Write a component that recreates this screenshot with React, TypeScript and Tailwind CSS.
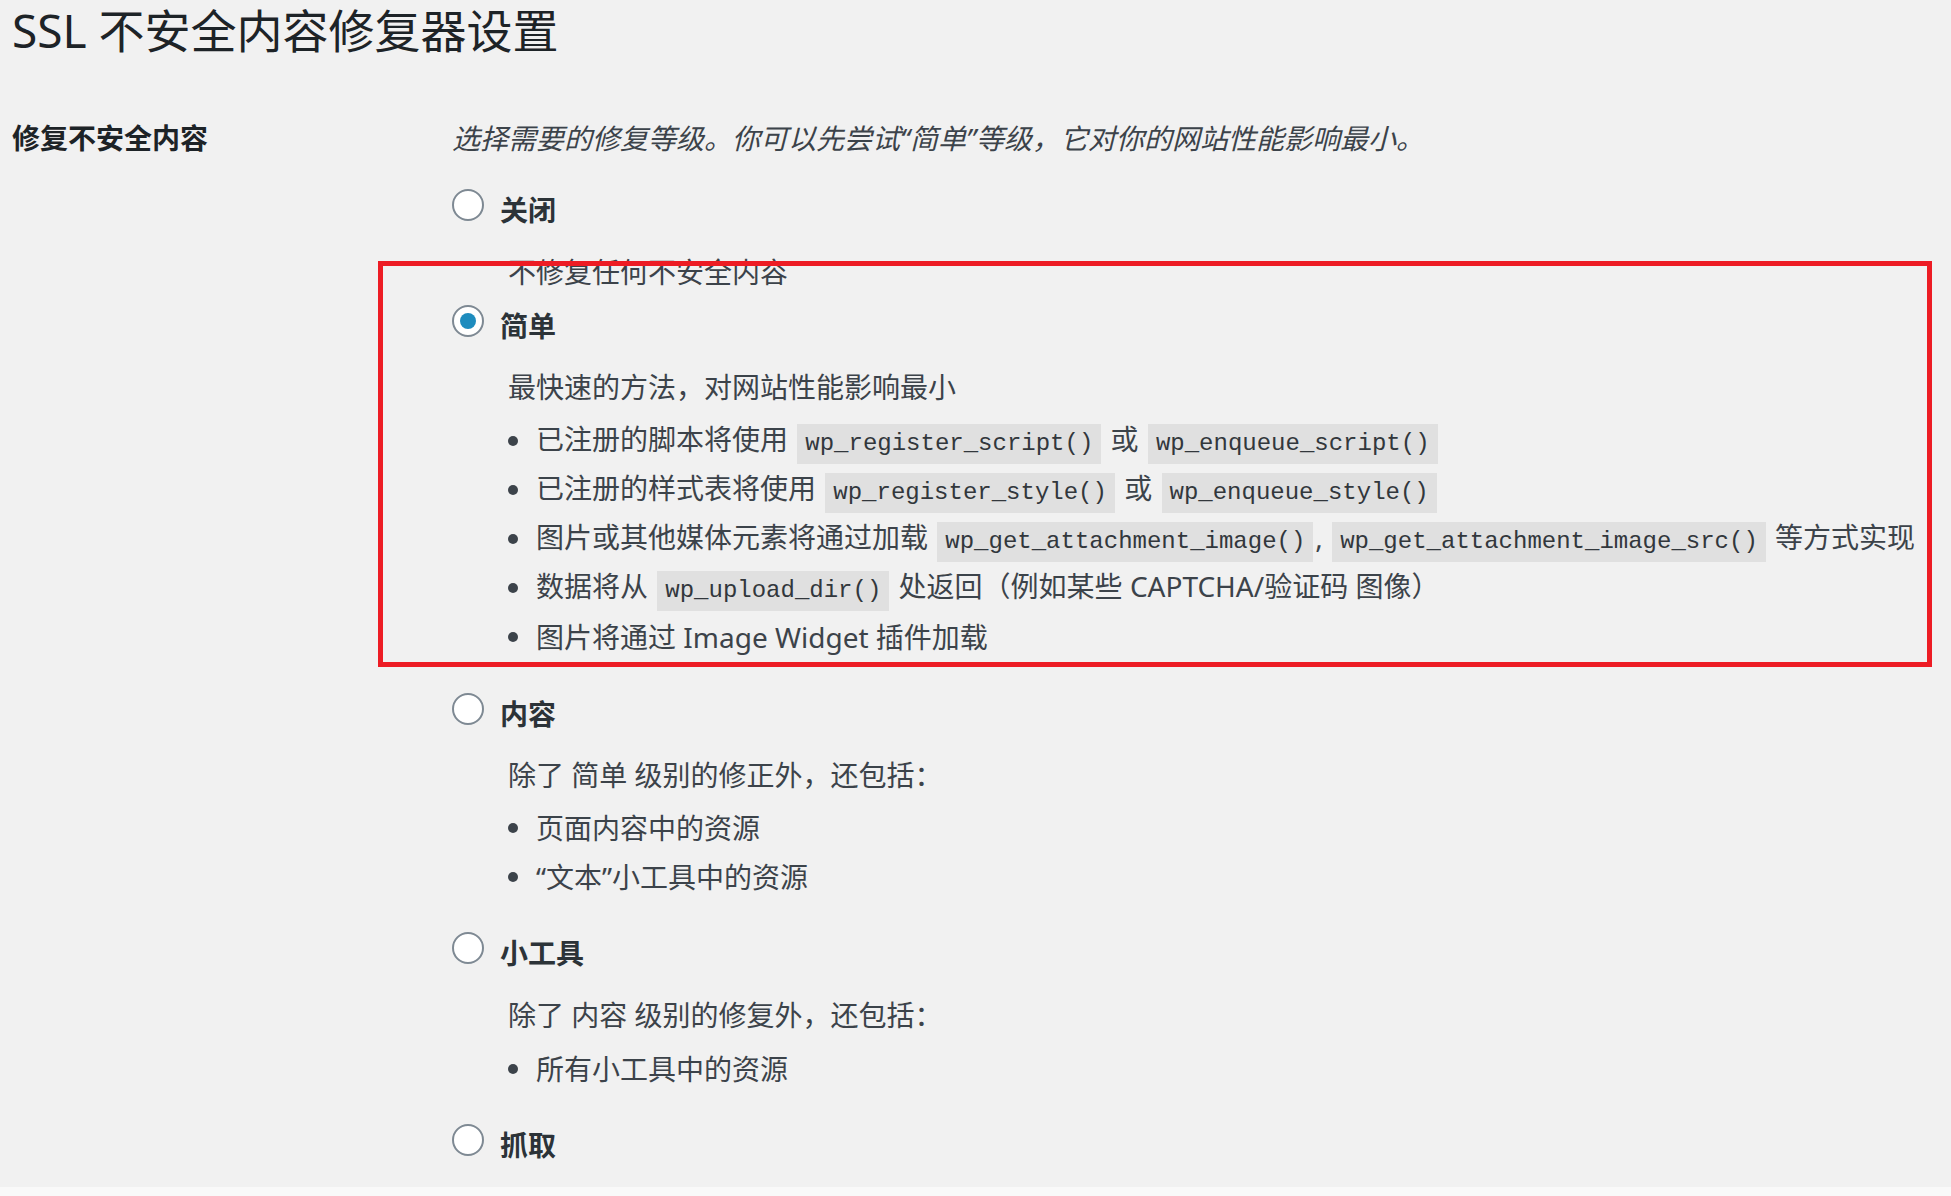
import type { ReactNode } from "react";

const font = "font-['Noto_Sans','Noto_Sans_CJK_SC',sans-serif]";

const Code = ({ children }: { children: ReactNode }) => (
  <code className="mx-[2px] inline-block h-[40px] bg-[#e0e0e0] px-[8px] font-['Liberation_Mono',monospace] text-[24px] leading-[40px] text-[#32373c]">
    {children}
  </code>
);

const Radio = ({
  label,
  checked,
  className,
}: {
  label: string;
  checked?: boolean;
  className: string;
}) => (
  <label className={`flex h-[44px] items-center ${className}`}>
    <span className="mb-[10px] flex h-[32px] w-[32px] shrink-0 items-center justify-center rounded-full border-2 border-[#7e8993] bg-white">
      {checked && <span className="h-[16px] w-[16px] rounded-full bg-[#1e8cbe]" />}
    </span>
    <span className="ml-[16px] text-[28px] font-bold leading-[44px] text-[#2c3338]">
      {label}
    </span>
  </label>
);

const Bullets = ({ items, className }: { items: ReactNode[]; className: string }) => (
  <ul className={`ml-[56px] ${className}`}>
    {items.map((item, i) => (
      <li key={i} className="flex h-[49px] items-center whitespace-nowrap">
        <span className="h-[10px] w-[10px] shrink-0 rounded-full bg-[#3c434a]" />
        <span className="ml-[18px]">{item}</span>
      </li>
    ))}
  </ul>
);

const Desc = ({ children, className }: { children: ReactNode; className: string }) => (
  <p className={`ml-[56px] h-[44px] leading-[44px] ${className}`}>{children}</p>
);

export default function App() {
  return (
    <div className={`${font} w-full bg-[#f1f1f1] text-[28px] text-[#3c434a]`}>
      <div className="relative h-[1187px] pl-[12px]">
        <h1 className="h-[60px] text-[46px] font-normal leading-[60px] text-[#1d2327]">
          SSL 不安全内容修复器设置
        </h1>

        <div className="mt-[56px] flex">
          <div className="w-[440px] shrink-0 text-[28px] font-bold leading-[44px] text-[#1d2327]">
            修复不安全内容
          </div>

          <div className="flex-1">
            <p className="h-[44px] italic leading-[44px] text-[#3c434a]">
              选择需要的修复等级。你可以先尝试“简单”等级，它对你的网站性能影响最小。
            </p>

            <Radio label="关闭" className="mt-[28px]" />
            <Desc className="mt-[18px]">不修复任何不安全内容</Desc>

            <Radio label="简单" checked className="mt-[10px]" />
            <Desc className="mt-[17px]">最快速的方法，对网站性能影响最小</Desc>
            <Bullets
              className="mt-[7px]"
              items={[
                <>
                  已注册的脚本将使用 <Code>wp_register_script()</Code> 或{" "}
                  <Code>wp_enqueue_script()</Code>
                </>,
                <>
                  已注册的样式表将使用 <Code>wp_register_style()</Code> 或{" "}
                  <Code>wp_enqueue_style()</Code>
                </>,
                <>
                  图片或其他媒体元素将通过加载 <Code>wp_get_attachment_image()</Code>,{" "}
                  <Code>wp_get_attachment_image_src()</Code> 等方式实现
                </>,
                <>
                  数据将从 <Code>wp_upload_dir()</Code> 处返回（例如某些 CAPTCHA/验证码 图像）
                </>,
                <>图片将通过 Image Widget 插件加载</>,
              ]}
            />

            <Radio label="内容" className="mt-[31px]" />
            <Desc className="mt-[17px]">除了 简单 级别的修正外，还包括：</Desc>
            <Bullets
              className="mt-[6px]"
              items={[<>页面内容中的资源</>, <>“文本”小工具中的资源</>]}
            />

            <Radio label="小工具" className="mt-[30px]" />
            <Desc className="mt-[18px]">除了 内容 级别的修复外，还包括：</Desc>
            <Bullets className="mt-[7px]" items={[<>所有小工具中的资源</>]} />

            <Radio label="抓取" className="mt-[30px]" />
          </div>
        </div>

        {/* annotation frame drawn over the screenshot */}
        <div className="pointer-events-none absolute left-[378px] top-[261px] h-[406px] w-[1554px] border-[5px] border-[#ed1c24]" />
      </div>
      <div className="h-[9px] bg-[#f9f9f9]" />
    </div>
  );
}
